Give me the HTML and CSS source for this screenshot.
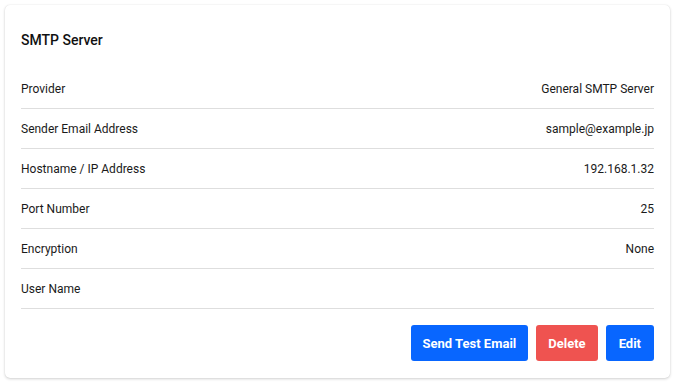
FILE: index.html
```html
<!DOCTYPE html>
<html>
<head>
<meta charset="utf-8">
<link rel="stylesheet" href="styles.css">
</head>
<body>
<div class="card">
  <h2 class="title">SMTP Server</h2>
  <div class="rows">
    <div class="row"><span class="label">Provider</span><span class="value">General SMTP Server</span></div>
    <div class="row"><span class="label">Sender Email Address</span><span class="value">sample@example.jp</span></div>
    <div class="row"><span class="label">Hostname / IP Address</span><span class="value">192.168.1.32</span></div>
    <div class="row"><span class="label">Port Number</span><span class="value">25</span></div>
    <div class="row"><span class="label">Encryption</span><span class="value">None</span></div>
    <div class="row"><span class="label">User Name</span><span class="value"></span></div>
  </div>
  <div class="actions">
    <button class="btn btn-primary">Send Test Email</button>
    <button class="btn btn-danger">Delete</button>
    <button class="btn btn-primary btn-edit">Edit</button>
  </div>
</div>
</body>
</html>
```
FILE: styles.css
```css
html, body {
  margin: 0;
  padding: 0;
  background: #ffffff;
}
body {
  padding: 5px;
  font-family: Roboto, "Liberation Sans", sans-serif;
  color: #1a1a1a;
}
.card {
  background: #fff;
  border-radius: 5px;
  box-shadow: 0 1px 3px rgba(0,0,0,0.18), 0 0 1px rgba(0,0,0,0.12);
  padding: 16px;
  height: 373px;
  box-sizing: border-box;
}
.title {
  margin: 0;
  padding-top: 9px;
  font-size: 14px;
  font-weight: 500;
  line-height: 20px;
  color: #111;
}
.rows {
  margin-top: 19px;
}
.row {
  display: flex;
  justify-content: space-between;
  align-items: center;
  height: 40px;
  box-sizing: border-box;
  border-bottom: 1px solid #dedede;
  font-size: 12px;
}
.actions {
  display: flex;
  justify-content: flex-end;
  gap: 8px;
  margin-top: 16px;
}
.btn {
  height: 36px;
  border: none;
  border-radius: 3px;
  color: #fff;
  font-family: Roboto, "Liberation Sans", sans-serif;
  font-size: 13px;
  font-weight: 700;
  padding: 0 12px;
}
.btn-edit {
  padding: 0 13px;
}
.btn-primary {
  background: #0866ff;
}
.btn-danger {
  background: #ef5350;
}
```
